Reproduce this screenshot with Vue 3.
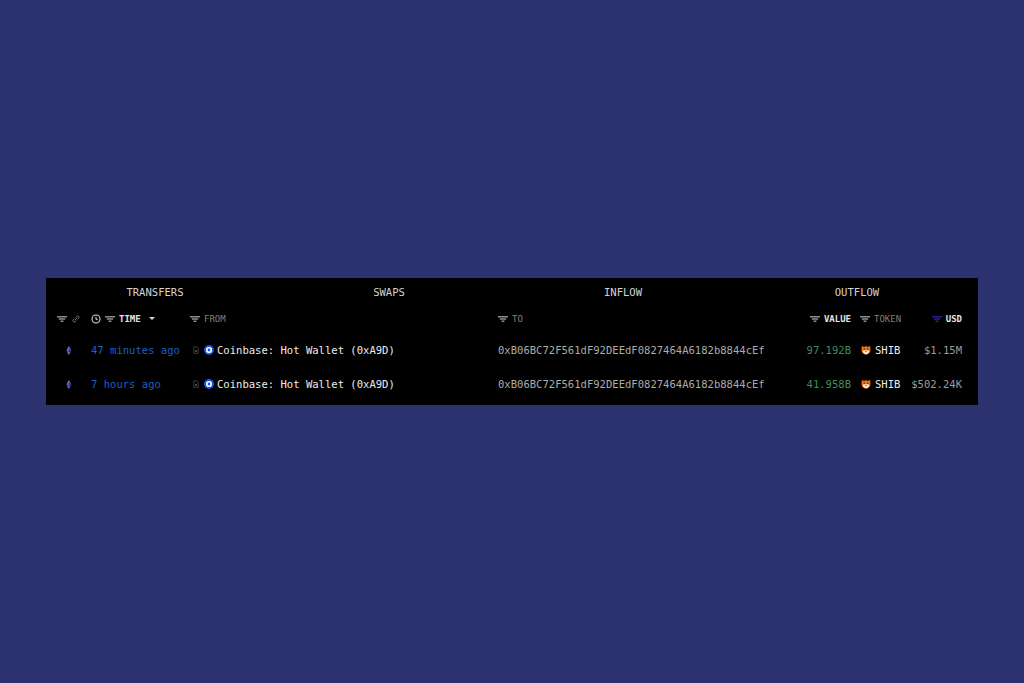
<script setup>
const tabs = ['TRANSFERS', 'SWAPS', 'INFLOW', 'OUTFLOW']
const rows = [
  { time: '47 minutes ago', value: '97.192B', usd: '$1.15M' },
  { time: '7 hours ago', value: '41.958B', usd: '$502.24K' }
]
</script>

<template>
  <main class="page">
    <section class="panel">
      <nav class="tabs">
        <span v-for="t in tabs" :key="t" class="tab">{{ t }}</span>
      </nav>
      <div class="grid head">
        <div class="c-icons">
          <svg class="filter" viewBox="0 0 10 6"><path d="M0 0h10v1.500H0zM1.800 2.200h6.400v1.500H1.800zM3.600 4.400h2.800v1.500H3.600z" fill="#8d8d8d"/></svg>
          <svg class="link" viewBox="0 0 12 12" fill="none" stroke="#777" stroke-width="1.200"><path d="M5 7l2-2M4.200 5.600L2.600 7.200a1.600 1.600 0 0 0 2.200 2.200l1.600-1.600M7.800 6.400l1.600-1.600a1.600 1.600 0 0 0-2.200-2.200L5.600 4.200"/></svg>
        </div>
        <div class="c-time hcell strong">
          <svg class="clock" viewBox="0 0 12 12" fill="none" stroke="#d8d8d8" stroke-width="1.300"><circle cx="6" cy="6" r="4.800"/><path d="M6 3.200V6l1.900 1.200"/></svg>
          <svg class="filter" viewBox="0 0 10 6"><path d="M0 0h10v1.500H0zM1.800 2.200h6.400v1.500H1.800zM3.600 4.400h2.800v1.500H3.600z" fill="#8d8d8d"/></svg>
          <span>TIME</span>
          <i class="caret"></i>
        </div>
        <div class="c-from hcell">
          <svg class="filter" viewBox="0 0 10 6"><path d="M0 0h10v1.500H0zM1.800 2.200h6.400v1.500H1.800zM3.600 4.400h2.800v1.500H3.600z" fill="#8d8d8d"/></svg>
          <span>FROM</span>
        </div>
        <div class="c-to hcell">
          <svg class="filter" viewBox="0 0 10 6"><path d="M0 0h10v1.500H0zM1.800 2.200h6.400v1.500H1.800zM3.600 4.400h2.800v1.500H3.600z" fill="#8d8d8d"/></svg>
          <span>TO</span>
        </div>
        <div class="c-value hcell strong">
          <svg class="filter" viewBox="0 0 10 6"><path d="M0 0h10v1.500H0zM1.800 2.200h6.400v1.500H1.800zM3.600 4.400h2.800v1.500H3.600z" fill="#8d8d8d"/></svg>
          <span>VALUE</span>
        </div>
        <div class="c-token hcell indent">
          <svg class="filter" viewBox="0 0 10 6"><path d="M0 0h10v1.500H0zM1.800 2.200h6.400v1.500H1.800zM3.600 4.400h2.800v1.500H3.600z" fill="#8d8d8d"/></svg>
          <span>TOKEN</span>
        </div>
        <div class="c-usd hcell strong">
          <svg class="filter" viewBox="0 0 10 6"><path d="M0 0h10v1.500H0zM1.800 2.200h6.400v1.500H1.800zM3.600 4.400h2.800v1.500H3.600z" fill="#2a1f8f"/></svg>
          <span>USD</span>
        </div>
      </div>
      <div v-for="r in rows" :key="r.time" class="grid row">
        <div class="c-icons eth-cell">
          <svg class="eth" viewBox="0 0 8 12"><path d="M4 0L0.600 6 4 4.400z" fill="#7c89d8"/><path d="M4 0l3.400 6L4 4.400z" fill="#4a57a8"/><path d="M4 4.400L.6 6 4 8z" fill="#5a68c0"/><path d="M4 4.400L7.400 6 4 8z" fill="#333d85"/><path d="M.6 6.800L4 12V8.800z" fill="#7c89d8"/><path d="M7.400 6.800L4 12V8.800z" fill="#4a57a8"/></svg>
        </div>
        <div class="c-time time">{{ r.time }}</div>
        <div class="c-from from">
          <svg class="doc" viewBox="0 0 8 10" fill="none" stroke="#4c4f57" stroke-width="1"><path d="M1 .6h4l2 2v6.800H1z"/><path d="M2.600 5.200h2.800v2.400H2.600z" fill="#4c4f57" stroke="none"/></svg>
          <svg class="cb" viewBox="0 0 12 12"><circle cx="6" cy="6" r="6" fill="#1652f0"/><circle cx="6" cy="6" r="3.700" fill="#fff"/><circle cx="6" cy="6" r="1.700" fill="#1652f0"/></svg>
          <span>Coinbase: Hot Wallet (0xA9D)</span>
        </div>
        <div class="c-to addr">0xB06BC72F561dF92DEEdF0827464A6182b8844cEf</div>
        <div class="c-value value">{{ r.value }}</div>
        <div class="c-token token">
          <svg class="shib" viewBox="0 0 12 12"><path d="M1 .8l2.400 1.500a5.400 5.400 0 0 1 5.200 0L11 .8l.4 5.200A5.400 5.600 0 1 1 .6 6z" fill="#f0700f"/><path d="M2 7c1 0 2.400-.6 4-.6s3 .6 4 .6c-.3 2.400-2 4-4 4S2.300 9.400 2 7z" fill="#fff3e0"/><circle cx="3.900" cy="5" r=".8" fill="#3a1a00"/><circle cx="8.100" cy="5" r=".8" fill="#3a1a00"/><path d="M4.800 7.500h2.400L6 9z" fill="#3a1a00"/></svg>
          <span>SHIB</span>
        </div>
        <div class="c-usd usd">{{ r.usd }}</div>
      </div>
    </section>
  </main>
</template>

<style>
html, body { margin: 0; background: #2c3270; }
</style>

<style scoped>
.page {
  width: 1024px;
  height: 683px;
  box-sizing: border-box;
  padding: 278px 46px 0;
  background: #2c3270;
  font-family: "DejaVu Sans Mono", "Liberation Mono", monospace;
}
.panel {
  width: 932px;
  height: 127px;
  background: #000;
  overflow: hidden;
}
.tabs {
  display: grid;
  grid-template-columns: repeat(4, 234px);
  margin-left: -8px;
  height: 27px;
  align-items: center;
}
.tab {
  text-align: center;
  font-size: 10.55px;
  color: #d4d4d4;
}
.grid {
  display: grid;
  grid-template-columns: 34px 99px 308px 300px 53px 52px 1fr;
  padding: 0 16px 0 11px;
  align-items: center;
}
.head { height: 28px; padding-bottom: 1px; box-sizing: border-box; }
.row { height: 34px; font-size: 10.55px; }
.hcell {
  display: flex;
  align-items: center;
  gap: 4px;
  font-size: 9px;
  color: #7f7f7f;
}
.strong { color: #e4e4e4; font-weight: 700; }
.indent { padding-left: 9px; }
.c-icons { display: flex; align-items: center; gap: 4px; }
.c-value, .c-usd { justify-content: flex-end; text-align: right; }
.filter { width: 10px; height: 6px; flex: none; }
.link { width: 10px; height: 10px; flex: none; }
.clock { width: 10px; height: 10px; flex: none; }
.caret {
  width: 0;
  height: 0;
  margin-left: 4px;
  border-left: 3.5px solid transparent;
  border-right: 3.5px solid transparent;
  border-top: 3.5px solid #d8d8d8;
}
.eth-cell { padding-left: 9px; }
.eth { width: 6px; height: 9px; }
.time { color: #1a5fc4; }
.from { display: flex; align-items: center; color: #ececec; padding-left: 3px; }
.doc { width: 6px; height: 8px; margin-right: 5px; flex: none; }
.cb { width: 10px; height: 10px; margin-right: 3px; flex: none; }
.addr { color: #ababab; }
.value { color: #3f8c60; }
.token { display: flex; align-items: center; gap: 4px; padding-left: 10px; color: #ececec; }
.shib { width: 10px; height: 10px; flex: none; }
.usd { color: #9a9a9a; }
</style>
